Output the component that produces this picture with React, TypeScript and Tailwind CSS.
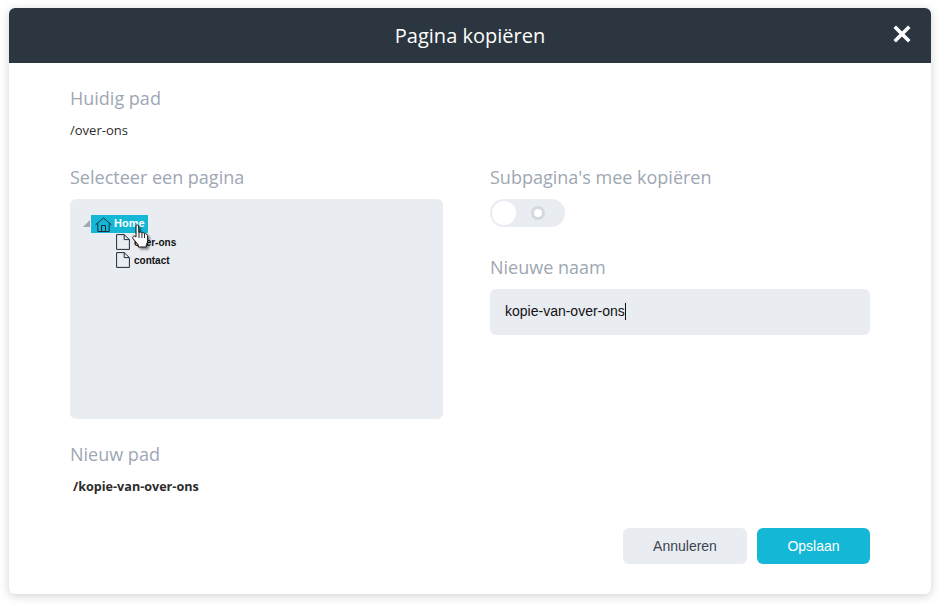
const labelClass = "text-[18px] leading-6 text-[#9ea7b4]";

function HomeIcon() {
  return (
    <svg width="17" height="15" viewBox="0 0 17 15" fill="none" stroke="#1f2d3a" strokeWidth="1">
      <path d="M0.6 7.8 8.5 1l7.900 6.800" />
      <path d="M2.800 6.200v8.300h11.400V6.200" />
      <path d="M6.500 14.500V8.500h4v6" />
    </svg>
  );
}

function PageIcon() {
  return (
    <svg width="14" height="16" viewBox="0 0 14 16" fill="none" stroke="#1f2d3a" strokeWidth="1">
      <path d="M0.6 0.6h7.600l5.200 5v9.800H0.6z" />
      <path d="M8.200 0.6v5h5.200" />
    </svg>
  );
}

function HandCursor() {
  return (
    <svg width="19" height="24" viewBox="0 0 19 24" className="drop-shadow-[2px_2px_1px_rgba(0,0,0,0.45)]">
      <path
        d="M5 2c0-1.500 2.600-1.500 2.700 0l.1 6.500 1.300-.4c.8-.2 1.500.1 1.800.7.8-.4 1.700-.2 2.100.6.8-.3 1.700 0 2 .8.900-.1 1.600.5 1.600 1.400v4.900c0 1.700-.5 3-1.300 4.100v2.400H7.200v-2.200C5.600 18.600 3.500 16.600 2 14.500c-.6-.9-.3-1.900.5-2.300.8-.3 1.600 0 2.500.9z"
        fill="#fff"
        stroke="#111"
        strokeWidth="1"
        strokeLinejoin="round"
      />
      <path d="M8 9v5M10.900 9v5M13.500 10v4" stroke="#111" strokeWidth="0.9" fill="none" />
    </svg>
  );
}

function PageTree() {
  return (
    <div className="relative h-[220px] rounded-md bg-[#e9ecf1] pt-4 pl-[13px] font-['Liberation_Sans',sans-serif] text-[10px] font-bold text-[#111]">
      <div className="flex items-center">
        <span className="mr-[1px] -mt-[2px] h-0 w-0 border-b-[7px] border-l-[7px] border-b-[#9ea7b4] border-l-transparent" />
        <div className="flex h-[18px] w-[57px] items-center bg-[#14b8d6] pl-[4px] text-[11px] text-white">
          <HomeIcon />
          <span className="ml-[2px] -mt-[1px]">Home</span>
        </div>
      </div>
      <div className="ml-[33px] flex h-[18px] items-center gap-[4px]">
        <PageIcon />
        <span>over-ons</span>
      </div>
      <div className="ml-[33px] flex h-[18px] items-center gap-[4px]">
        <PageIcon />
        <span>contact</span>
      </div>
      <div className="absolute left-[61px] top-[25px]">
        <HandCursor />
      </div>
    </div>
  );
}

export default function App() {
  return (
    <div className="h-[606px] w-[945px] overflow-hidden bg-white pl-[9px] pt-2 font-['Open_Sans',sans-serif]">
      <div className="h-[586px] w-[922px] rounded-md bg-white shadow-[0_2px_10px_rgba(40,50,60,0.22)]">
        <header className="relative flex h-[55px] items-center justify-center rounded-t-md bg-[#2b3640] text-[20px] text-white">
          Pagina kopiëren
          <svg className="absolute right-[20px] top-[17px]" width="18" height="18" viewBox="0 0 18 18">
            <path d="M3 3l12 12M15 3L3 15" stroke="#fff" strokeWidth="3.6" strokeLinecap="square" fill="none" />
          </svg>
        </header>

        <div className="px-[61px] pt-[23px]">
          <h2 className={labelClass}>Huidig pad</h2>
          <p className="mt-[10px] text-[13px] leading-5 text-[#2b2b2b]">/over-ons</p>

          <div className="mt-[25px] flex items-start gap-[47px]">
            <div className="w-[373px]">
              <h2 className={`${labelClass} mb-[10px]`}>Selecteer een pagina</h2>
              <PageTree />
              <h2 className={`${labelClass} mt-[23px]`}>Nieuw pad</h2>
              <p className="mt-[11px] pl-[3px] text-[12.6px] leading-5 font-bold text-[#2b2b2b]">/kopie-van-over-ons</p>
            </div>

            <div className="w-[380px]">
              <h2 className={`${labelClass} mb-[10px]`}>Subpagina's mee kopiëren</h2>
              <div className="flex h-[28px] w-[75px] items-center justify-between rounded-full bg-[#e9ecf1] pr-[20px] pl-[2px]">
                <span className="h-[24px] w-[24px] rounded-full bg-white" />
                <span className="h-[14px] w-[14px] rounded-full border-[3px] border-[#d3d8e0] bg-white" />
              </div>
              <h2 className={`${labelClass} mt-[28px] mb-[10px]`}>Nieuwe naam</h2>
              <div className="flex h-[46px] items-center rounded-md bg-[#e9ecf1] px-[15px] pb-[2px] font-['Liberation_Sans',sans-serif] text-[14px] text-[#111]">
                kopie-van-over-ons
                <span className="h-[17px] w-px bg-[#111]" />
              </div>
            </div>
          </div>

          <div className="mt-[31px] flex justify-end gap-[10px] font-['Liberation_Sans',sans-serif] text-[14px]">
            <button className="h-9 w-[124px] rounded-md bg-[#e9ecf1] text-[#3a4450]">Annuleren</button>
            <button className="h-9 w-[113px] rounded-md bg-[#14b8d6] text-white">Opslaan</button>
          </div>
        </div>
      </div>
    </div>
  );
}
